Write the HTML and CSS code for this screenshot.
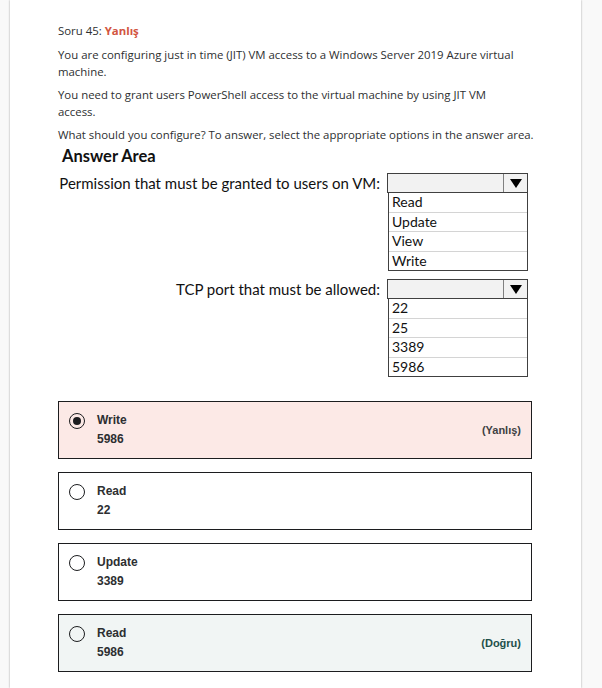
FILE: index.html
```html
<!DOCTYPE html>
<html lang="tr">
<head>
<meta charset="utf-8">
<title>Soru 45</title>
<link rel="stylesheet" href="styles.css">
</head>
<body>
<div class="card">
  <div class="question">
    <p class="q-title">Soru 45: <span class="wrong">Yanlış</span></p>
    <p>You are configuring just in time (JIT) VM access to a Windows Server 2019 Azure virtual machine.</p>
    <p>You need to grant users PowerShell access to the virtual machine by using JIT VM<br>access.</p>
    <p>What should you configure? To answer, select the appropriate options in the answer area.</p>
  </div>

  <div class="answer-area">
    <div class="aa-title">Answer Area</div>
    <div class="aa-row">
      <div class="aa-label">Permission that must be granted to users on VM:</div>
      <div class="dropdown">
        <div class="dd-head">
          <span class="dd-value"></span>
          <span class="dd-arrow"><svg width="12" height="9" viewBox="0 0 12 9"><polygon points="0,0 12,0 6,9" fill="#000"/></svg></span>
        </div>
        <ul class="dd-list">
          <li>Read</li>
          <li>Update</li>
          <li>View</li>
          <li>Write</li>
        </ul>
      </div>
    </div>
    <div class="aa-row">
      <div class="aa-label">TCP port that must be allowed:</div>
      <div class="dropdown">
        <div class="dd-head">
          <span class="dd-value"></span>
          <span class="dd-arrow"><svg width="12" height="9" viewBox="0 0 12 9"><polygon points="0,0 12,0 6,9" fill="#000"/></svg></span>
        </div>
        <ul class="dd-list">
          <li>22</li>
          <li>25</li>
          <li>3389</li>
          <li>5986</li>
        </ul>
      </div>
    </div>
  </div>

  <div class="options">
    <div class="option option-wrong">
      <span class="radio checked"></span>
      <div class="opt-text"><div>Write</div><div>5986</div></div>
      <span class="verdict">(Yanlış)</span>
    </div>
    <div class="option">
      <span class="radio"></span>
      <div class="opt-text"><div>Read</div><div>22</div></div>
    </div>
    <div class="option">
      <span class="radio"></span>
      <div class="opt-text"><div>Update</div><div>3389</div></div>
    </div>
    <div class="option option-right">
      <span class="radio"></span>
      <div class="opt-text"><div>Read</div><div>5986</div></div>
      <span class="verdict verdict-right">(Doğru)</span>
    </div>
  </div>
</div>
</body>
</html>
```

FILE: styles.css
```css
html, body {
  margin: 0;
  padding: 0;
}
body {
  background: #f9f9f9;
  font-family: "Liberation Sans", Arial, sans-serif;
  color: #1c1d1f;
}
.card {
  margin-left: 10px;
  width: 571px;
  min-height: 688px;
  box-sizing: border-box;
  background: #fff;
  box-shadow: 0 0 2px rgba(0,0,0,0.35);
  padding: 22px 40px 0 48px;
}
.question p {
  margin: 0 0 6px 0;
  font-family: "Open Sans", "Liberation Sans", sans-serif;
  font-size: 11.4px;
  line-height: 17px;
  color: #2d2f31;
}
.question .q-title {
  margin-bottom: 7px;
}
.wrong {
  color: #d2553f;
  font-weight: bold;
}
.answer-area {
  margin-top: -3px;
  font-family: Lato, "Liberation Sans", sans-serif;
  color: #111;
}
.aa-title {
  font-weight: bold;
  font-size: 16.5px;
  line-height: 20px;
  padding-left: 4px;
  margin-bottom: 7px;
}
.aa-row {
  display: grid;
  grid-template-columns: 322px 141px;
  column-gap: 7px;
  margin-bottom: 8px;
}
.aa-label {
  text-align: right;
  font-size: 15px;
  line-height: 20px;
}
.dropdown {
  width: 141px;
}
.dd-head {
  display: flex;
  height: 20px;
  box-sizing: border-box;
  border: 1px solid #404040;
  background: #f2f2f2;
}
.dd-value {
  flex: 1;
}
.dd-arrow {
  width: 23px;
  border-left: 1px solid #808080;
  display: flex;
  align-items: center;
  justify-content: center;
}
.dd-arrow svg {
  display: block;
}
.dd-list {
  list-style: none;
  margin: 0 0 0 1px;
  padding: 0;
  border: 1px solid #404040;
  border-top: none;
}
.dd-list li {
  font-size: 14px;
  line-height: 18.5px;
  padding-left: 3px;
  border-bottom: 1px solid #d4d4d4;
}
.dd-list li:last-child {
  border-bottom: none;
}
.options {
  margin-top: 24px;
  margin-right: 9px;
  display: flex;
  flex-direction: column;
  gap: 13px;
}
.option {
  display: flex;
  align-items: flex-start;
  border: 1px solid #1c1d1f;
  padding: 9px 10px 9px 10px;
  background: #fff;
}
.option-wrong {
  background: #fce9e6;
}
.option-right {
  background: #f1f5f4;
}
.radio {
  width: 16px;
  height: 16px;
  box-sizing: border-box;
  border: 1px solid #1c1d1f;
  border-radius: 50%;
  margin: 2px 12px 0 0;
  display: flex;
  align-items: center;
  justify-content: center;
  flex: none;
}
.radio.checked::after {
  content: "";
  width: 8px;
  height: 8px;
  border-radius: 50%;
  background: #1c1d1f;
}
.opt-text {
  flex: 1;
  font-size: 12px;
  line-height: 19px;
  font-weight: bold;
  color: #2d2f31;
}
.verdict {
  align-self: center;
  font-size: 11px;
  font-weight: bold;
  color: #3e4143;
}
.verdict-right {
  color: #1e4f4a;
}
```
